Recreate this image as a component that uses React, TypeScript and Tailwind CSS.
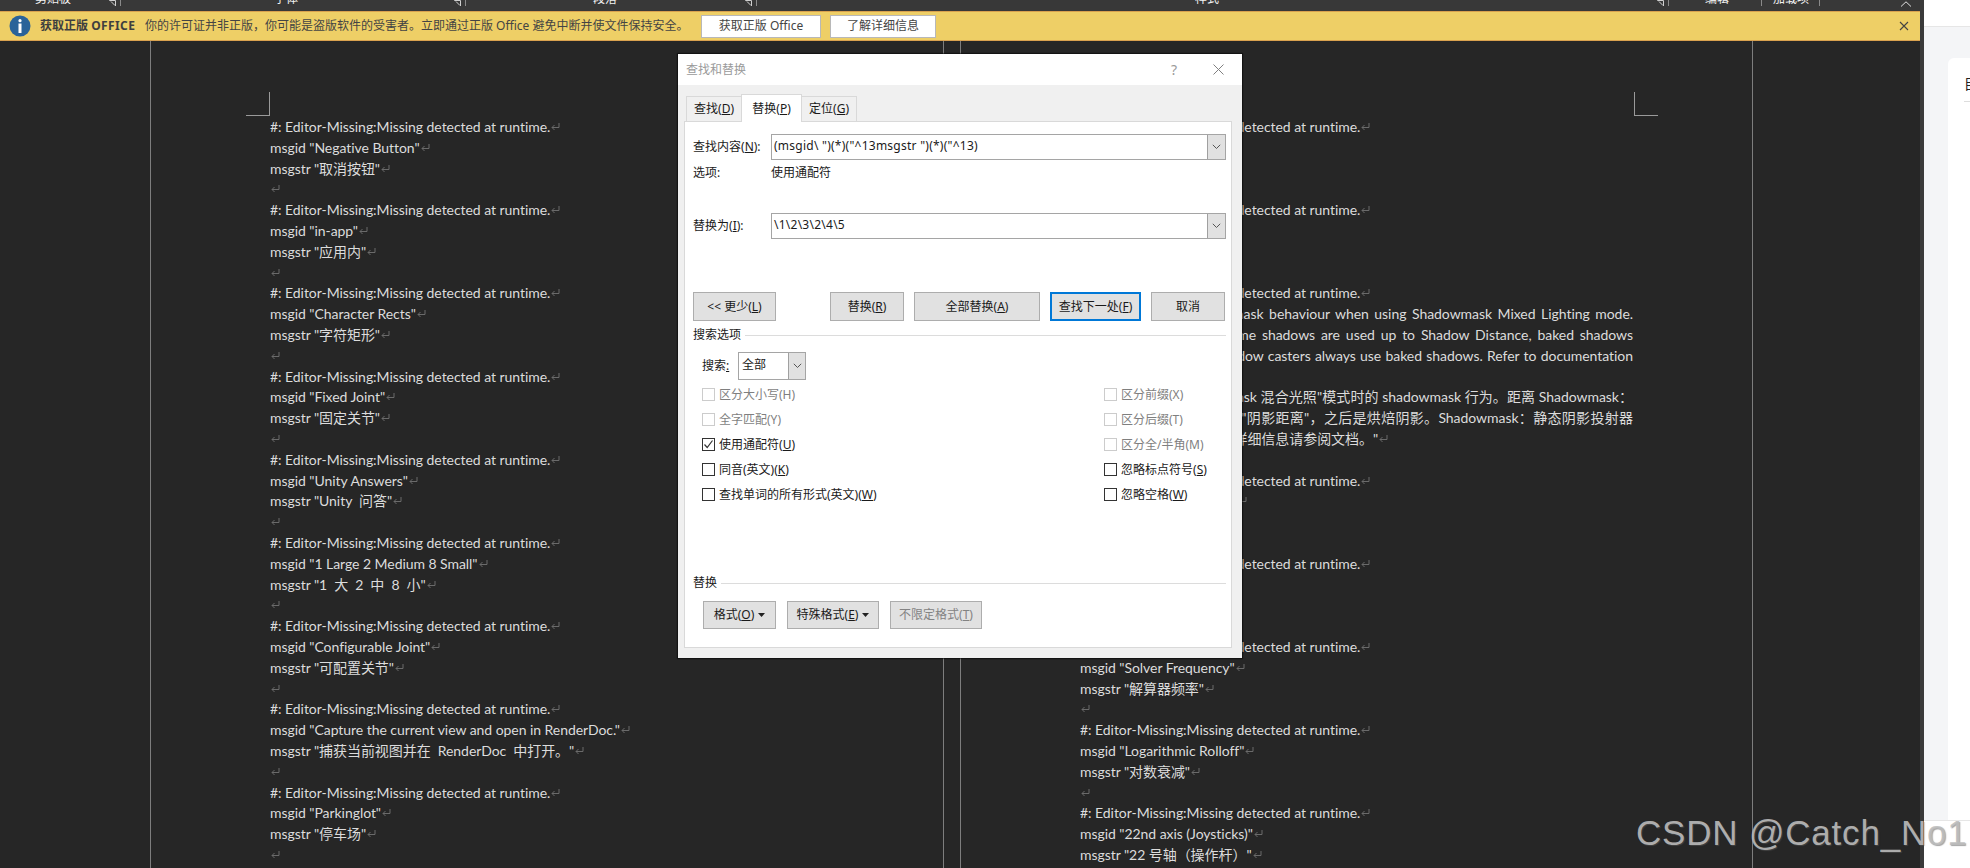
import React from 'react';

const UI_FONT = "font-['Noto_Sans','Noto_Sans_CJK_SC',sans-serif]";

type Row = { text: string; justify?: boolean; noMark?: boolean };

const HEADER = '#: Editor-Missing:Missing detected at runtime.';

const entry = (id: string, str: string): Row[] => [
  { text: HEADER },
  { text: `msgid "${id}"` },
  { text: `msgstr "${str}"` },
  { text: '' },
];

const leftRows: Row[] = [
  ...entry('Negative Button', '取消按钮'),
  ...entry('in-app', '应用内'),
  ...entry('Character Rects', '字符矩形'),
  ...entry('Fixed Joint', '固定关节'),
  ...entry('Unity Answers', 'Unity  问答'),
  ...entry('1 Large 2 Medium 8 Small', '1  大  2  中  8  小'),
  ...entry('Configurable Joint', '可配置关节'),
  ...entry('Capture the current view and open in RenderDoc.', '捕获当前视图并在  RenderDoc  中打开。'),
  ...entry('Parkinglot', '停车场'),
];

const rightRows: Row[] = [
  ...entry('Box Collider', '盒体碰撞体'),
  ...entry('Light Probes', '光照探针'),
  { text: HEADER },
  { text: 'msgid "Sets the Shadowmask behaviour when using Shadowmask Mixed Lighting mode.', justify: true, noMark: true },
  { text: 'Distance Shadows: Realtime shadows are used up to Shadow Distance, baked shadows', justify: true, noMark: true },
  { text: 'after. Shadows: Static shadow casters always use baked shadows. Refer to documentation', justify: true, noMark: true },
  { text: 'for more information."' },
  { text: 'msgstr "确定使"Shadowmask 混合光照"模式时的 shadowmask 行为。距离 Shadowmask\uFF1A', justify: true, noMark: true },
  { text: '实时阴影 使用范围不超过"阴影距离"\uFF0C之后是烘焙阴影。Shadowmask\uFF1A静态阴影投射器', justify: true, noMark: true },
  { text: '始终都使用烘焙的阴影。详细信息请参阅文档。"' },
  { text: '' },
  ...entry('Reflection Probes', '反射探针'),
  ...entry('Solver Iterations', '解算器迭代'),
  ...entry('Solver Frequency', '解算器频率'),
  ...entry('Logarithmic Rolloff', '对数衰减'),
  { text: HEADER },
  { text: 'msgid "22nd axis (Joysticks)"' },
  { text: 'msgstr "22 号轴\uFF08操作杆\uFF09"' },
];

const ParaMark = () => (
  <svg width="9" height="9" viewBox="0 0 9 9" fill="none" stroke="#6a6a6a" strokeWidth="1" className="inline-block ml-[1px] align-[1px]">
    <path d="M8 1V5.5H1M3.5 3L1 5.5L3.5 8" />
  </svg>
);

const Page = ({ rows, cropRight }: { rows: Row[]; cropRight?: boolean }) => (
  <div className={`${cropRight ? 'w-[793px]' : 'w-[794px]'} h-[827px] shrink-0 border-x border-[#7d7d7d] pt-[51px] overflow-hidden`}>
    {cropRight ? (
      <div className="ml-[673px] w-[24px] h-[24px] border-l border-b border-[#9a9a9a]" />
    ) : (
      <div className="ml-[95px] w-[24px] h-[24px] border-r border-b border-[#9a9a9a]" />
    )}
    <div className="ml-[119px] w-[553px] mt-[1px] text-[14px] leading-[20.8px] tracking-[-0.05px] text-[#dcdcdc] font-['Lato','Noto_Sans_CJK_SC',sans-serif] whitespace-pre">
      {rows.map((row, i) => (
        <div key={i} className={row.justify ? 'h-[20.8px] whitespace-normal [text-align:justify] [text-align-last:justify] [text-justify:inter-word]' : 'h-[20.8px]'}>
          {row.text}
          {!row.noMark && <ParaMark />}
        </div>
      ))}
    </div>
  </div>
);

const Group = ({ width, label, offset, launcher }: { width: string; label?: string; offset: string; launcher?: boolean }) => (
  <div className={`${width} h-[6px] shrink-0 border-r border-[#8a8a8a] flex justify-between`}>
    <span className={`${offset} -mt-[8px] text-[12px] leading-[14px] text-[#f2f2f2]`}>{label}</span>
    {launcher && (
      <svg width="7" height="6" viewBox="0 0 7 6" fill="none" stroke="#d0d0d0" strokeWidth="1" className="mr-[4px]">
        <path d="M0.5 0V0.5H6.5V6M2 1.5L6 5.5" />
      </svg>
    )}
  </div>
);

const Ribbon = () => (
  <div className={`h-[11px] shrink-0 bg-[#383838] flex overflow-hidden ${UI_FONT}`}>
    <Group width="w-[121px]" label="剪贴板" offset="ml-[35px]" launcher />
    <Group width="w-[345px]" label="字体" offset="ml-[153px]" launcher />
    <Group width="w-[291px]" label="段落" offset="ml-[127px]" launcher />
    <Group width="w-[912px]" label="样式" offset="ml-[438px]" launcher />
    <Group width="w-[93px]" label="编辑" offset="ml-[36px]" />
    <Group width="w-[58px]" label="加载项" offset="ml-[11px]" />
    <svg width="12" height="6" viewBox="0 0 12 6" fill="none" stroke="#e0e0e0" strokeWidth="1" className="ml-[80px] mt-[1px]">
      <path d="M1 5.5L6 0.8L11 5.5" />
    </svg>
  </div>
);

const LicenseBar = () => (
  <div className={`h-[30px] shrink-0 bg-[#eecf66] border-y border-[#d9a24f] flex items-center text-[12px] text-[#444] ${UI_FONT}`}>
    <svg width="22" height="22" viewBox="0 0 22 22" className="ml-[9px] shrink-0">
      <circle cx="11" cy="11" r="10.5" fill="#2a6399" />
      <circle cx="11" cy="5.7" r="1.6" fill="#fff" />
      <rect x="9.5" y="8.5" width="3" height="9.5" fill="#fff" />
    </svg>
    <span className="ml-[9px] w-[105px] font-bold text-[#3f3f3f]">获取正版 <span className="tracking-[0.4px]">OFFICE</span></span>
    <span className="w-[556px] whitespace-nowrap">{'你的许可证并非正版\uFF0C你可能是盗版软件的受害者。立即通过正版 Office 避免中断并使文件保持安全。'}</span>
    <button className="w-[120px] h-[23px] bg-white border border-[#b8b8b8]">获取正版 Office</button>
    <button className="ml-[9px] w-[106px] h-[23px] bg-white border border-[#b8b8b8]">了解详细信息</button>
    <svg width="10" height="10" viewBox="0 0 10 10" fill="none" stroke="#444" strokeWidth="1.1" className="ml-[963px]">
      <path d="M1 1L9 9M9 1L1 9" />
    </svg>
  </div>
);

// "查找(D)" -> underlines the access key the way Windows dialogs do
const Mnemonic = ({ text }: { text: string }) => {
  const m = text.match(/^(.*)\((\w)\)(.*)$/);
  if (!m) return <>{text}</>;
  return (
    <>
      {m[1]}(<u>{m[2]}</u>){m[3]}
    </>
  );
};

const ComboArrow = ({ width }: { width: string }) => (
  <span className={`${width} h-full bg-[#e1e1e1] border-l border-[#a0a0a0] flex items-center justify-center shrink-0`}>
    <svg width="9" height="6" viewBox="0 0 9 6" fill="none" stroke="#555" strokeWidth="1">
      <path d="M0.8 0.8L4.5 4.5L8.2 0.8" />
    </svg>
  </span>
);

const ComboRow = ({ label, value, className }: { label: string; value: string; className: string }) => (
  <div className={`flex items-center pl-[8px] pr-[5px] ${className}`}>
    <span className="w-[78px] shrink-0"><Mnemonic text={label} /></span>
    <div className="flex-1 h-[26px] flex border border-[#a5a5a5] bg-white">
      <span className="flex-1 pl-[2px] leading-[22px] text-[12px] tracking-[0.25px]">{value}</span>
      <ComboArrow width="w-[18px]" />
    </div>
  </div>
);

const Btn = ({ width, label, primary, disabled, caret }: { width: string; label: string; primary?: boolean; disabled?: boolean; caret?: boolean }) => (
  <button
    className={`${width} h-full shrink-0 bg-[#e1e1e1] flex items-center justify-center gap-[4px] ${
      primary ? 'border-2 border-[#0078d7]' : 'border border-[#adadad]'
    } ${disabled ? 'text-[#838383]' : ''}`}
  >
    <span><Mnemonic text={label} /></span>
    {caret && (
      <svg width="7" height="4" viewBox="0 0 7 4" fill="#222">
        <path d="M0 0H7L3.5 4Z" />
      </svg>
    )}
  </button>
);

const Check = ({ label, checked, disabled }: { label: string; checked?: boolean; disabled?: boolean }) => (
  <div className={`h-[25px] flex items-center gap-[4px] ${disabled ? 'text-[#7f7f7f]' : ''}`}>
    <span className={`w-[13px] h-[13px] shrink-0 bg-white border flex items-center justify-center ${disabled ? 'border-[#cccccc]' : 'border-[#333]'}`}>
      {checked && (
        <svg width="11" height="11" viewBox="0 0 11 11" fill="none" stroke="#333" strokeWidth="1.2">
          <path d="M1.5 5.5L4.2 8.5L9.5 1.5" />
        </svg>
      )}
    </span>
    <span className="whitespace-nowrap">{disabled ? label : <Mnemonic text={label} />}</span>
  </div>
);

const SectionTitle = ({ label, className }: { label: string; className: string }) => (
  <div className={`h-[18px] flex items-center gap-[4px] pl-[8px] pr-[5px] ${className}`}>
    <span>{label}</span>
    <span className="flex-1 h-px bg-[#dcdcdc]" />
  </div>
);

const FindReplaceDialog = () => (
  <div className={`absolute left-[678px] top-[54px] w-[564px] h-[604px] bg-[#f0f0f0] shadow-[0_0_1px_1px_rgba(0,0,0,0.5)] flex flex-col text-[12px] leading-[18px] text-[#1a1a1a] ${UI_FONT}`}>
    <div className="h-[31px] bg-white flex items-center pl-[8px] pr-[18px] text-[#9a9a9a]">
      <span className="mt-[1px]">查找和替换</span>
      <span className="ml-auto text-[14px]">?</span>
      <svg width="11" height="11" viewBox="0 0 11 11" fill="none" stroke="#808080" strokeWidth="1" className="ml-[36px] -mt-[1px]">
        <path d="M0.5 0.5L10.5 10.5M10.5 0.5L0.5 10.5" />
      </svg>
    </div>

    <div className="h-[36px] pl-[8px] flex items-end">
      <div className="w-[55px] h-[25px] border border-r-0 border-b-0 border-[#d9d9d9] flex items-center justify-center"><span><Mnemonic text="查找(D)" /></span></div>
      <div className="relative z-10 w-[61px] h-[28px] -mb-px bg-white border border-b-0 border-[#d9d9d9] flex items-center justify-center"><span><Mnemonic text="替换(P)" /></span></div>
      <div className="w-[55px] h-[25px] border border-l-0 border-b-0 border-[#d9d9d9] flex items-center justify-center"><span><Mnemonic text="定位(G)" /></span></div>
    </div>

    <div className="mx-[6px] w-[548px] h-[527px] bg-white border border-[#d9d9d9]">
      <ComboRow className="mt-[12px]" label="查找内容(N):" value={'(msgid\\ ")(*)("^13msgstr ")(*)("^13)'} />
      <div className="mt-[3px] h-[20px] flex items-center pl-[8px]">
        <span className="w-[78px]">选项:</span>
        <span>使用通配符</span>
      </div>
      <ComboRow className="mt-[30px]" label="替换为(I):" value={'\\1\\2\\3\\2\\4\\5'} />

      <div className="mt-[53px] h-[29px] flex pl-[8px]">
        <Btn width="w-[83px]" label="<< 更少(L)" />
        <div className="ml-[54px] flex gap-[10px] h-full">
          <Btn width="w-[74px]" label="替换(R)" />
          <Btn width="w-[126px]" label="全部替换(A)" />
          <Btn width="w-[91px]" label="查找下一处(F)" primary />
          <Btn width="w-[74px]" label="取消" />
        </div>
      </div>

      <SectionTitle className="mt-[5px]" label="搜索选项" />

      <div className="mt-[8px] pl-[17px] h-[28px] flex items-center">
        <span className="w-[36px]">搜索<u>:</u></span>
        <div className="w-[68px] h-full flex border border-[#a5a5a5]">
          <span className="flex-1 pl-[3px] leading-[24px]">全部</span>
          <ComboArrow width="w-[17px]" />
        </div>
      </div>

      <div className="mt-[2px] pl-[17px] grid grid-cols-[402px_1fr]">
        <Check label="区分大小写(H)" disabled />
        <Check label="区分前缀(X)" disabled />
        <Check label="全字匹配(Y)" disabled />
        <Check label="区分后缀(T)" disabled />
        <Check label="使用通配符(U)" checked />
        <Check label="区分全/半角(M)" disabled />
        <Check label="同音(英文)(K)" />
        <Check label="忽略标点符号(S)" />
        <Check label="查找单词的所有形式(英文)(W)" />
        <Check label="忽略空格(W)" />
      </div>

      <SectionTitle className="mt-[67px]" label="替换" />

      <div className="mt-[9px] h-[28px] pl-[18px] flex gap-[11px]">
        <Btn width="w-[73px]" label="格式(O)" caret />
        <Btn width="w-[92px]" label="特殊格式(E)" caret />
        <Btn width="w-[92px]" label="不限定格式(T)" disabled />
      </div>
    </div>
  </div>
);

const SidePane = () => (
  <div className={`w-[46px] shrink-0 h-full bg-white flex flex-col overflow-hidden ${UI_FONT}`}>
    <div className="h-[27px] shrink-0 border-b border-[#e6e6e6]" />
    <div className="h-[793px] shrink-0 bg-[#f4f5f7] pl-[24px] pt-[31px]">
      <div className="h-full bg-white rounded-tl-[6px] pl-[16px] pt-[14px]">
        <div className="text-[14px] leading-[24px] text-[#222] whitespace-nowrap">目录</div>
        <div className="mt-[5px] h-px bg-[#dddddd]" />
      </div>
    </div>
    <div className="flex-1 border-t border-[#e6e6e6]" />
  </div>
);

export default function App() {
  return (
    <div className="relative w-[1970px] h-[868px] overflow-hidden flex bg-[#262626]">
      <div className="w-[1920px] h-full shrink-0 flex flex-col">
        <Ribbon />
        <LicenseBar />
        <div className="flex-1 pl-[150px] flex gap-[16px] overflow-hidden">
          <Page rows={leftRows} />
          <Page rows={rightRows} cropRight />
        </div>
      </div>
      <div className="w-[4px] h-full shrink-0 bg-[#3a3a3a]" />
      <SidePane />
      <FindReplaceDialog />
      <div className="absolute left-[1636px] top-[813px] text-[35px] leading-[40px] tracking-[0.8px] whitespace-nowrap text-[#bdbdbd]/90 [text-shadow:1px_1px_1px_rgba(90,90,90,0.55)] font-['Liberation_Sans',sans-serif]">
        CSDN @Catch_No1
      </div>
    </div>
  );
}
